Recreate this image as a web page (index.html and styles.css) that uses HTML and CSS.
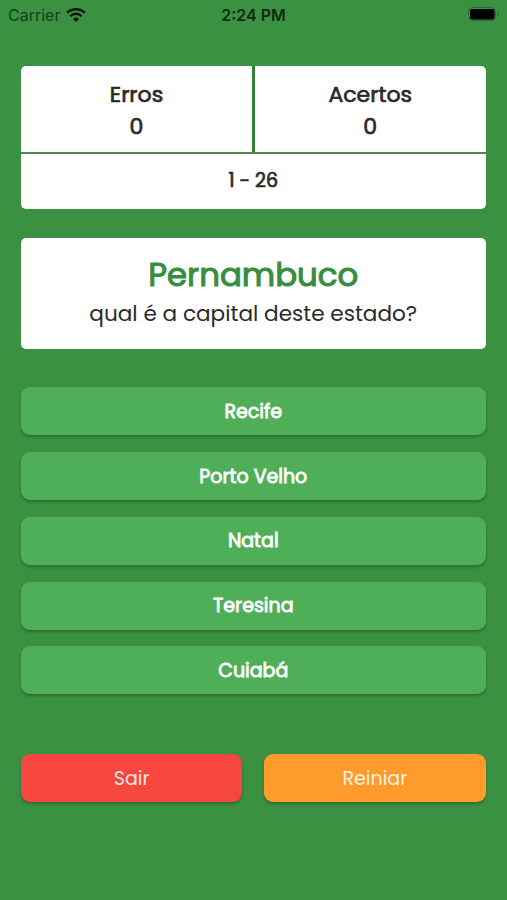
FILE: index.html
```html
<!DOCTYPE html>
<html lang="pt-BR">
<head>
    <meta charset="UTF-8">
    <meta name="viewport" content="width=device-width, initial-scale=1.0">
    <title>Quiz de Capitais</title>
    <link rel="stylesheet" href="styles.css">
</head>
<body>
    <header class="status-bar">
        <div class="carrier">
            <span>Carrier</span>
            <svg class="wifi" viewBox="0 0 20 14" width="20" height="14">
                <path d="M1.2 4.8a12.6 12.6 0 0 1 17.6 0" />
                <path d="M4.4 8.1a8 8 0 0 1 11.2 0" />
                <path class="wifi-dot" d="M7 11a4.4 4.4 0 0 1 6 0L10 14z" />
            </svg>
        </div>
        <div class="time">2:24 PM</div>
        <div class="battery">
            <svg viewBox="0 0 31 15" width="31" height="15">
                <rect class="battery-case" x="0.5" y="0.5" width="27" height="13" rx="4" />
                <rect x="2" y="2" width="24.5" height="10.5" rx="2" />
                <path class="battery-tip" d="M29 5v5c2-.8 2-4.2 0-5z" />
            </svg>
        </div>
    </header>

    <main class="container">
        <section class="placar">
            <div class="contadores">
                <div class="contador"><span>Erros</span><span>0</span></div>
                <div class="contador"><span>Acertos</span><span>0</span></div>
            </div>
            <div class="rodada">1 - 26</div>
        </section>

        <section class="pergunta">
            <h1>Pernambuco</h1>
            <p>qual é a capital deste estado?</p>
        </section>

        <div class="opcoes">
            <button>Recife</button>
            <button>Porto Velho</button>
            <button>Natal</button>
            <button>Teresina</button>
            <button>Cuiabá</button>
        </div>

        <div class="acoes">
            <button class="sair">Sair</button>
            <button class="reiniciar">Reiniar</button>
        </div>
    </main>
</body>
</html>
```
FILE: styles.css
```css
* {
    box-sizing: border-box;
}

body {
    margin: 0;
    min-height: 900px;
    background-color: #3a9142;
    font-family: Poppins, "Open Sans", sans-serif;
    color: #2a2a2a;
}

.status-bar {
    display: grid;
    grid-template-columns: 1fr auto 1fr;
    align-items: center;
    height: 29px;
    padding: 0 8px;
    font-family: Inter, sans-serif;
    font-size: 16px;
    color: #14401a;
}

.carrier {
    display: flex;
    align-items: center;
    gap: 6px;
}

.wifi {
    fill: none;
    stroke: #0b150b;
    stroke-width: 2.6;
}

.wifi-dot {
    fill: #0b150b;
    stroke: none;
}

.time {
    font-weight: 600;
    color: #10290f;
}

.battery {
    display: flex;
    justify-content: flex-end;
}

.battery-case {
    fill: none;
    stroke: #2b6d30;
}

.battery-tip {
    fill: #2b6d30;
}

.container {
    padding: 37px 21.5px 0 21px;
}

.placar,
.pergunta {
    background: white;
    border-radius: 5px;
    text-align: center;
}

.contadores {
    display: grid;
    grid-template-columns: 234px 1fr;
    height: 88px;
    border-bottom: 2px solid #4f8653;
}

.contador {
    display: flex;
    flex-direction: column;
    align-items: center;
    padding-top: 13px;
    font-size: 22px;
    line-height: 32px;
    -webkit-text-stroke: 0.7px;
}

.contador:first-child {
    border-right: 3px solid #348039;
}

.rodada {
    height: 55px;
    font-size: 19px;
    line-height: 54px;
    -webkit-text-stroke: 0.7px;
}

.pergunta {
    height: 111px;
    margin-top: 29.3px;
    padding-top: 13px;
}

.pergunta h1 {
    margin: 0;
    font-size: 32.4px;
    line-height: 48px;
    font-weight: 400;
    color: #388e3f;
    -webkit-text-stroke: 1.1px;
}

.pergunta p {
    margin: 0;
    font-size: 21.6px;
    line-height: 30px;
}

.opcoes {
    display: flex;
    flex-direction: column;
    gap: 16.7px;
    margin-top: 38.2px;
}

button {
    height: 48px;
    padding: 0;
    border: none;
    border-radius: 9px;
    box-shadow: 0 2px 3px rgba(0, 0, 0, 0.25);
    background-color: #4faf58;
    color: white;
    font-family: inherit;
    font-size: 19px;
    -webkit-text-stroke: 0.8px;
}

.acoes {
    display: grid;
    grid-template-columns: 1fr 1fr;
    gap: 22px;
    margin-top: 60px;
}

.acoes button {
    color: rgba(255, 255, 255, 0.88);
    -webkit-text-stroke: 0;
}

.acoes .sair {
    background-color: #f5473d;
}

.acoes .reiniciar {
    background-color: #ff9b2a;
}
```
